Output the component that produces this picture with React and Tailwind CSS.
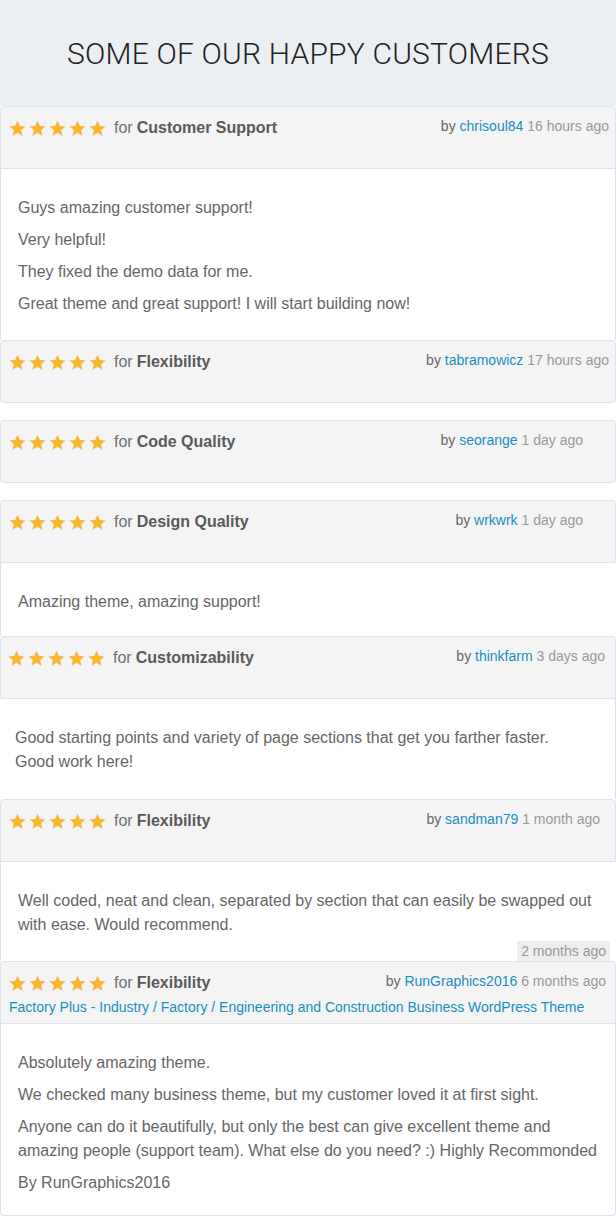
import React from 'react'

const reviews = [
  {
    category: 'Customer Support',
    user: 'chrisoul84',
    when: '16 hours ago',
    body: [
      'Guys amazing customer support!',
      'Very helpful!',
      'They fixed the demo data for me.',
      'Great theme and great support! I will start building now!',
    ],
    bodyClass: 'h-[171px] border-x pl-[17px] pr-4',
    right: 'pr-[6px]',
  },
  { category: 'Flexibility', user: 'tabramowicz', when: '17 hours ago', gapAfter: true, right: 'pr-[6px]' },
  { category: 'Code Quality', user: 'seorange', when: '1 day ago', gapAfter: true, right: 'pr-[32px]' },
  {
    category: 'Design Quality',
    user: 'wrkwrk',
    when: '1 day ago',
    body: ['Amazing theme, amazing support!'],
    bodyClass: 'h-[73px] border-l pl-[17px] pr-4',
    right: 'pr-[32px]',
  },
  {
    category: 'Customizability',
    user: 'thinkfarm',
    when: '3 days ago',
    body: ['Good starting points and variety of page sections that get you farther faster. Good work here!'],
    bodyClass: 'h-[100px] border-r pl-[15px] pr-[52px]',
    right: 'pr-[10px]',
    shift: true,
  },
  {
    category: 'Flexibility',
    user: 'sandman79',
    when: '1 month ago',
    body: ['Well coded, neat and clean, separated by section that can easily be swapped out with ease. Would recommend.'],
    bodyClass: 'h-[99px] border-l pl-[17px] pr-4',
    stamp: '2 months ago',
    right: 'pr-[15px]',
  },
  {
    category: 'Flexibility',
    user: 'RunGraphics2016',
    when: '6 months ago',
    product: 'Factory Plus - Industry / Factory / Engineering and Construction Business WordPress Theme',
    body: [
      'Absolutely amazing theme.',
      'We checked many business theme, but my customer loved it at first sight.',
      'Anyone can do it beautifully, but only the best can give excellent theme and amazing people (support team). What else do you need? :) Highly Recommonded',
      'By RunGraphics2016',
    ],
    bodyClass: 'h-[192px] border-x border-b rounded-b pl-[17px] pr-4',
    right: 'pr-[9px]',
  },
]

function Star() {
  return (
    <svg viewBox="0 0 24 24" className="w-[17px] h-[17px]">
      <path
        d="M12 1.5l3.2 7.1 7.6.7-5.8 5.1 1.8 7.6L12 18l-6.8 4 1.8-7.6-5.8-5.1 7.6-.7z"
        fill="#f7b928"
        stroke="#f4a8a0"
        strokeWidth="0.4"
      />
    </svg>
  )
}

function Review({ r }) {
  const hasBody = !!r.body
  return (
    <div className={r.gapAfter ? 'mb-[17px]' : ''}>
      <div
        className={
          'h-[63px] bg-[#f4f4f4] border border-[#dde3e9] ' +
          (hasBody ? 'rounded-t ' : 'rounded ') +
          (r.shift ? 'pl-[7px] ' : 'pl-2 ') +
          r.right
        }
      >
        <div className="flex items-start justify-between pt-[8px]">
          <div className="flex items-center h-[26px]">
            <div className="flex items-center gap-[3px]">
              {[0, 1, 2, 3, 4].map(i => <Star key={i} />)}
            </div>
            <span className="ml-2 text-[16px] text-[#707070]">for </span>
            <span className="ml-1 text-[16px] font-bold text-[#5a5a5a]">{r.category}</span>
          </div>
          <div className="text-[14px] leading-[20px] pt-[1px] text-[#999]">
            <span className="text-[#666]">by </span>
            <span className="text-[#1a8ec2]">{r.user}</span> {r.when}
          </div>
        </div>
        {r.product && (
          <div className="text-[14px] leading-[20px] text-[#1a8ec2] mt-[1px]">{r.product}</div>
        )}
      </div>
      {hasBody && (
        <div className={'bg-white border-[#dde3e9] pt-[27px] ' + r.bodyClass}>
          {r.body.map((t, i) => (
            <p key={i} className="text-[16px] leading-6 mb-2 text-[#666]">{t}</p>
          ))}
          {r.stamp && (
            <div className="flex justify-end -mr-[10px] -mt-[4px]">
              <span className="bg-[#eeeeee] text-[14px] leading-[20px] text-[#999] px-[4px]">{r.stamp}</span>
            </div>
          )}
        </div>
      )}
    </div>
  )
}

export default function App() {
  return (
    <div className="w-[616px] min-h-[1220px] bg-white font-['Liberation_Sans',Arial,sans-serif]">
      <div className="h-[106px] bg-[#eceff2] flex items-center justify-center">
        <h1 className="font-['Roboto',sans-serif] font-light text-[30px] text-[#222] tracking-[0.2px]">
          SOME OF OUR HAPPY CUSTOMERS
        </h1>
      </div>
      {reviews.map((r, i) => <Review key={i} r={r} />)}
    </div>
  )
}
